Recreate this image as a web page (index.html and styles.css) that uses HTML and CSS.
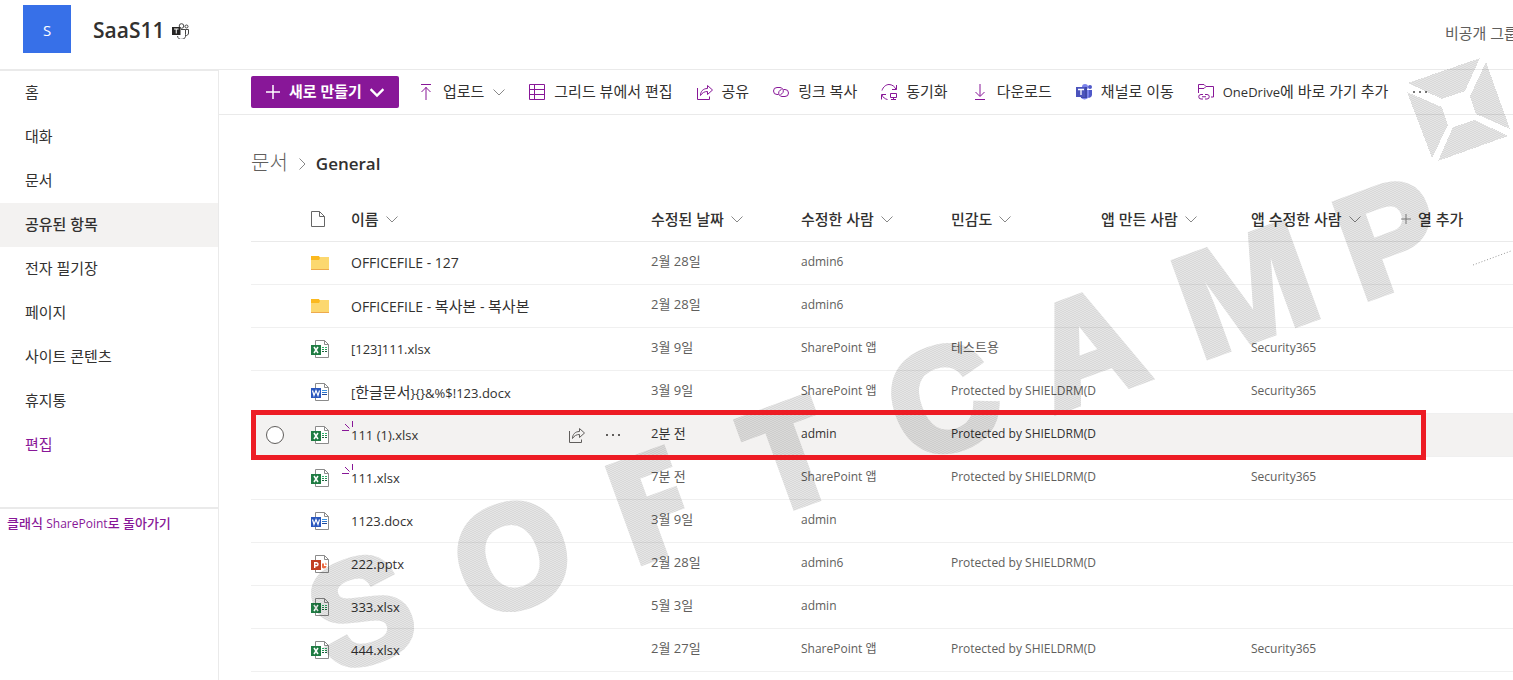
FILE: index.html
```html
<!DOCTYPE html>
<html lang="ko">
<head>
<meta charset="utf-8">
<title>SaaS11 - General</title>
<link rel="stylesheet" href="styles.css">
</head>
<body>
<svg class="defs" aria-hidden="true">
  <symbol id="chev" viewBox="0 0 12 12"><path d="M.5 3.5 6 9l5.500-5.500" fill="none" stroke="currentColor"/></symbol>
  <symbol id="share" viewBox="0 0 16 16"><path d="M.5 4v11.500h12v-3M3.500 11.500c0-4 2.500-7 7-7V1.500l5 4.500-5 4.500v-3c-3 0-5 1-7 4Z" fill="none" stroke="currentColor"/></symbol>
  <symbol id="dots" viewBox="0 0 16 16"><path d="M1 7h2v2H1zM7 7h2v2H7zM13 7h2v2h-2z" fill="currentColor"/></symbol>
  <symbol id="folder" viewBox="0 0 18 18"><path d="M0 3h18v13H0z" fill="#fcd86f"/><path d="M0 2h8l1 2-1 2H0z" fill="#fbb91f"/><path d="M0 15h18v1H0z" fill="#eeaa4c"/></symbol>
  <symbol id="page" viewBox="0 0 18 18"><path d="M4.500.5h9l4 4v13h-13z" fill="#fff" stroke="#8b8b8b"/><path d="M13.500.5v4h4" fill="none" stroke="#8b8b8b"/></symbol>
  <symbol id="xlsx" viewBox="0 0 18 18"><use href="#page"/><path d="M11 7.500h2M14 7.500h2" stroke="#31b06c"/><path d="M11 9.500h2M14 9.500h2" stroke="#219150"/><path d="M11 11.500h2M14 11.500h2" stroke="#17623a"/><path d="M0 5h10v10H0z" fill="#1f7c43"/><path d="m3 7 4 6M7 7l-4 6" stroke="#fff" stroke-width="1.500"/></symbol>
  <symbol id="docx" viewBox="0 0 18 18"><use href="#page"/><path d="M11 7.500h5" stroke="#3a93e0"/><path d="M11 9.500h5" stroke="#2b73ca"/><path d="M11 11.500h5" stroke="#20499c"/><path d="M0 5h10v10H0z" fill="#2a57bd"/><path d="m1.500 7.500 1.500 5 2-5 2 5 1.500-5" fill="none" stroke="#fff" stroke-width="1.200"/></symbol>
  <symbol id="pptx" viewBox="0 0 18 18"><use href="#page"/><path d="M11 8.500h2V11h2.500a2.500 2.500 0 0 1-4.500 1.500z" fill="#ec6a42"/><path d="M14 7.500v2.500h2a2.500 2.500 0 0 0-2-2.500" fill="#f7a78d"/><path d="M0 5h10v10H0z" fill="#c13f21"/><path d="M3.700 13V7.700h1.800a1.500 1.500 0 0 1 0 3H4" fill="none" stroke="#fff" stroke-width="1.400"/></symbol>
  <symbol id="new" viewBox="0 0 12 12"><path d="M0 9.500h7M3 3l4.500 4.500M10.500 0v6" fill="none" stroke="#881798"/></symbol>
</svg>

<header class="site">
  <div class="logo">S</div>
  <h1>SaaS11</h1>
  <svg class="teams-mark" viewBox="0 0 17 16" role="img" aria-label="Teams"><g fill="none" stroke="#444"><circle cx="9.500" cy="3" r="2.300"/><circle cx="14.500" cy="3.500" r="1.500"/><path d="M9 6.500h4.500v5a4 4 0 0 1-8 1.500M13.500 6.500h3V10a2.500 2.500 0 0 1-3 2.500"/></g><path d="M0 4h8.500v8H0z" fill="#252423"/><path d="M2 6h4.500M4.250 6v4.500" stroke="#fff"/></svg>
  <span class="privacy">비공개 그룹</span>
</header>

<div class="frame">
  <nav class="side">
    <ul>
      <li><a href="#">홈</a></li>
      <li><a href="#">대화</a></li>
      <li><a href="#">문서</a></li>
      <li><a href="#" class="current">공유된 항목</a></li>
      <li><a href="#">전자 필기장</a></li>
      <li><a href="#">페이지</a></li>
      <li><a href="#">사이트 콘텐츠</a></li>
      <li><a href="#">휴지통</a></li>
      <li><a href="#" class="edit">편집</a></li>
    </ul>
    <a class="classic" href="#">클래식 <span class="small">SharePoint</span>로 돌아가기</a>
  </nav>

  <main>
    <div class="commands">
      <button class="primary"><svg class="i16" viewBox="0 0 16 16"><path d="M8 1v14M1 8h14" stroke="currentColor" stroke-width="1.500"/></svg><span>새로 만들기</span><svg class="i14 bold" viewBox="0 0 12 12"><use href="#chev"/></svg></button>
      <button class="cmd"><svg class="i16" viewBox="0 0 16 16"><path d="M3 .5h10M8 3v13M3.500 8 8 3.500 12.500 8" fill="none" stroke="currentColor"/></svg><span>업로드</span><svg class="i12 muted"><use href="#chev"/></svg></button>
      <button class="cmd"><svg class="i16" viewBox="0 0 16 16"><path d="M.5.5h15v15H.5zM5.500.5v15M.5 5.500h15M.5 10.500h15" fill="none" stroke="currentColor"/></svg><span>그리드 뷰에서 편집</span></button>
      <button class="cmd"><svg class="i16"><use href="#share"/></svg><span>공유</span></button>
      <button class="cmd"><svg class="i16" viewBox="0 0 16 16"><path d="M5.500 10.500H4a3.500 3.500 0 0 1 0-7h3a3.500 3.500 0 0 1 3 5c-.5 1-1.500 1.700-2.500 2M10.500 5.500H12a3.500 3.500 0 0 1 0 7H9a3.500 3.500 0 0 1-3-5c.5-1 1.500-1.700 2.500-2" fill="none" stroke="currentColor"/></svg><span>링크 복사</span></button>
      <button class="cmd"><svg class="i16" viewBox="0 0 16 16"><path d="M1 6.500C2 3 5 .5 8 .5c3 0 6 2 7 5M15.500 1v4.500H11M6.500 15.500C4 15 2 13.500 1 11M.5 15.500V10.500H5M9.500 9.500h6v4h-6zM12.500 13.500v2M10 15.500h5" fill="none" stroke="currentColor"/></svg><span>동기화</span></button>
      <button class="cmd"><svg class="i16" viewBox="0 0 16 16"><path d="M3 15.500h10M8 0v12M3.500 8 8 12.500 12.500 8" fill="none" stroke="currentColor"/></svg><span>다운로드</span></button>
      <button class="cmd"><svg class="i16" viewBox="0 0 16 16"><circle cx="9" cy="3" r="3" fill="#7b83eb"/><circle cx="14" cy="3" r="2" fill="#5059c9"/><path d="M11 6h5v5a3 3 0 0 1-5 2z" fill="#5059c9"/><path d="M5 6h8v5a4.500 4.500 0 0 1-8.500 2z" fill="#7b83eb"/><path d="M5 3h6v11H5z" fill="#4048a8"/><path d="M0 3h9v10H0z" fill="#4b53bc"/><path d="M2 5.500h6M5 5.500V11" stroke="#fff" stroke-width="1.300"/></svg><span>채널로 이동</span></button>
      <button class="cmd"><svg class="i16" viewBox="0 0 16 16"><path d="M.5 9V.5H6l2 2h7.500v10.500H13M.5 4.500H6l2-2M7 10.500h2a2.200 2.200 0 0 1 0 4.500H7M5 15H3a2.200 2.200 0 0 1 0-4.500h2M4 12.750h4" fill="none" stroke="currentColor"/></svg><span><span class="latin">OneDrive</span>에 바로 가기 추가</span></button>
      <button class="cmd more" aria-label="더 보기"><svg class="i16"><use href="#dots"/></svg></button>
    </div>

    <div class="crumbs"><a href="#">문서</a><svg class="i12 turned"><use href="#chev"/></svg><h2>General</h2></div>

    <table>
      <colgroup><col class="c-pick"><col class="c-type"><col class="c-name"><col class="c-std"><col class="c-std"><col class="c-std"><col class="c-std"><col class="c-std"><col></colgroup>
      <thead>
        <tr>
          <th></th>
          <th class="kind"><svg class="i16" viewBox="0 0 16 16"><path d="M1.500.5h8l5 5v10h-13zM9.500.5v5h5" fill="none" stroke="#666"/></svg></th>
          <th><button>이름<svg class="i12"><use href="#chev"/></svg></button></th>
          <th><button>수정된 날짜<svg class="i12"><use href="#chev"/></svg></button></th>
          <th><button>수정한 사람<svg class="i12"><use href="#chev"/></svg></button></th>
          <th><button>민감도<svg class="i12"><use href="#chev"/></svg></button></th>
          <th><button>앱 만든 사람<svg class="i12"><use href="#chev"/></svg></button></th>
          <th><button>앱 수정한 사람<svg class="i12"><use href="#chev"/></svg></button></th>
          <th><button><svg class="i10" viewBox="0 0 10 10"><path d="M5 0v10M0 5h10" stroke="currentColor"/></svg>열 추가</button></th>
        </tr>
      </thead>
      <tbody>
        <tr><td></td><td class="type"><svg class="i18"><use href="#folder"/></svg></td><td class="name"><a class="dir" href="#">OFFICEFILE - 127</a></td><td>2월 28일</td><td><span class="small">admin6</span></td><td></td><td></td><td></td><td></td></tr>
        <tr><td></td><td class="type"><svg class="i18"><use href="#folder"/></svg></td><td class="name"><a class="dir" href="#">OFFICEFILE - <span class="ko">복사본</span> - <span class="ko">복사본</span></a></td><td>2월 28일</td><td><span class="small">admin6</span></td><td></td><td></td><td></td><td></td></tr>
        <tr><td></td><td class="type"><svg class="i18"><use href="#xlsx"/></svg></td><td class="name"><a href="#">[123]111.xlsx</a></td><td>3월 9일</td><td><span class="small">SharePoint 앱</span></td><td>테스트용</td><td></td><td><span class="small">Security365</span></td><td></td></tr>
        <tr><td></td><td class="type"><svg class="i18"><use href="#docx"/></svg></td><td class="name"><a href="#">[<span class="ko">한글문서</span>}{}&amp;%$!123.docx</a></td><td>3월 9일</td><td><span class="small">SharePoint 앱</span></td><td><span class="small">Protected by SHIELDRM(D</span></td><td></td><td><span class="small">Security365</span></td><td></td></tr>
        <tr class="active"><td class="pick"><input type="radio" name="row" aria-label="111 (1).xlsx 선택"></td><td class="type"><svg class="i18"><use href="#xlsx"/></svg></td><td class="name"><div class="line"><svg class="new"><use href="#new"/></svg><a href="#">111 (1).xlsx</a><button class="act share" aria-label="공유"><svg class="i16"><use href="#share"/></svg></button><button class="act" aria-label="작업 표시"><svg class="i16"><use href="#dots"/></svg></button></div></td><td>2분 전</td><td><span class="small">admin</span></td><td><span class="small">Protected by SHIELDRM(D</span></td><td></td><td></td><td></td></tr>
        <tr><td></td><td class="type"><svg class="i18"><use href="#xlsx"/></svg></td><td class="name"><div class="line"><svg class="new"><use href="#new"/></svg><a href="#">111.xlsx</a></div></td><td>7분 전</td><td><span class="small">SharePoint 앱</span></td><td><span class="small">Protected by SHIELDRM(D</span></td><td></td><td><span class="small">Security365</span></td><td></td></tr>
        <tr><td></td><td class="type"><svg class="i18"><use href="#docx"/></svg></td><td class="name"><a href="#">1123.docx</a></td><td>3월 9일</td><td><span class="small">admin</span></td><td></td><td></td><td></td><td></td></tr>
        <tr><td></td><td class="type"><svg class="i18"><use href="#pptx"/></svg></td><td class="name"><a href="#">222.pptx</a></td><td>2월 28일</td><td><span class="small">admin6</span></td><td><span class="small">Protected by SHIELDRM(D</span></td><td></td><td></td><td></td></tr>
        <tr><td></td><td class="type"><svg class="i18"><use href="#xlsx"/></svg></td><td class="name"><a href="#">333.xlsx</a></td><td>5월 3일</td><td><span class="small">admin</span></td><td></td><td></td><td></td><td></td></tr>
        <tr><td></td><td class="type"><svg class="i18"><use href="#xlsx"/></svg></td><td class="name"><a href="#">444.xlsx</a></td><td>2월 27일</td><td><span class="small">SharePoint 앱</span></td><td><span class="small">Protected by SHIELDRM(D</span></td><td></td><td><span class="small">Security365</span></td><td></td></tr>
      </tbody>
    </table>
  </main>
</div>

<svg class="watermark" width="1513" height="680" viewBox="0 0 1513 680">
  <defs>
    <pattern id="grain" width="4" height="4" patternUnits="userSpaceOnUse">
      <path d="M0 0h4v4H0z" fill="#000" fill-opacity=".1"/>
      <path d="M0 0h2v1H0zM2 1h2v1H2zM0 2h2v1H0zM2 3h2v1H2z" fill="#000" fill-opacity=".05"/>
    </pattern>
  </defs>
  <g fill="url(#grain)" shape-rendering="crispEdges">
    <path d="M1408 83 1480 58 1465 91 1442 99ZM1486 62 1510 129 1476 114 1470 96ZM1407 92 1442 107 1448 125 1432 158ZM1438 161 1453 127 1475 120 1508 136Z"/>
  </g>
  <path d="m1473 265 38-14" stroke="#999" stroke-dasharray="1 2" fill="none"/>
  <mask id="letters"><text class="mark" transform="rotate(-20)" x="82 235 398 542 697 850 1000 1176" y="748">SO<tspan class="wide" y="751">FT</tspan><tspan y="748">CA</tspan><tspan class="wide" y="751">M</tspan><tspan y="748">P</tspan></text></mask>
  <rect width="1513" height="680" fill="url(#grain)" mask="url(#letters)"/>
</svg>
<div class="callout"></div>
</body>
</html>
```
FILE: styles.css
```css
* { box-sizing: border-box; }
html, body { height: 100%; }
body {
  margin: 0;
  display: flex;
  flex-direction: column;
  position: relative;
  overflow: hidden;
  background: #fff;
  color: #323130;
  font: 15px/20px "Open Sans", "Noto Sans CJK KR", sans-serif;
}
a { color: inherit; text-decoration: none; }
button { font: inherit; color: inherit; background: none; border: 0; padding: 0; margin: 0; white-space: nowrap; }
svg { flex: none; display: block; }
.defs { position: absolute; width: 0; height: 0; }
.i10 { width: 10px; height: 10px; }
.i12 { width: 12px; height: 12px; }
.i14 { width: 14px; height: 14px; }
.i16 { width: 16px; height: 16px; }
.i18 { width: 18px; height: 18px; }
.bold { stroke-width: 2; }
.latin { font-size: 13px; }

.site {
  flex: none;
  height: 70px;
  display: flex;
  align-items: flex-start;
  padding: 5px 0 0 23px;
  border-bottom: 1px solid #eaeaea;
}
.logo { width: 48px; height: 48px; background: #3770e8; color: #fff; font-size: 15px; line-height: 50px; text-align: center; }
.site h1 { margin: 0 8px 0 22px; font-size: 21px; line-height: 51px; font-weight: 600; }
.teams-mark { width: 17px; height: 16px; margin-top: 18px; }
.privacy { width: 68px; margin: 18px 0 0 auto; color: #605e5c; white-space: nowrap; }

.frame { flex: 1; min-height: 0; display: flex; }
.side { flex: none; width: 219px; border-right: 1px solid #eaeaea; border-top: 1px solid #eaeaea; }
.side ul { list-style: none; margin: 0; padding: 0 0 40px; border-bottom: 2px solid #eaeaea; }
.side li a { display: block; padding: 10px 25px 12px; line-height: 22px; }
.side .current { background: #f3f2f1; font-weight: 500; }
.side .edit, .classic { color: #881798; }
.classic { display: block; padding: 4px 7px; font-size: 13px; font-weight: 500; white-space: nowrap; }

main { flex: 1; min-width: 0; }
.commands { display: flex; align-items: center; height: 45px; padding-left: 32px; border-bottom: 1px solid #eaeaea; gap: 24px; }
.commands span { padding-bottom: 2px; }
.cmd { display: flex; align-items: center; gap: 9px; color: #323130; }
.cmd svg { color: #881798; }
.cmd .muted { color: #888; }
.cmd.more svg { color: #777; }
.primary { display: flex; align-items: center; gap: 8px; height: 32px; padding: 0 15px 0 14px; margin-right: -5px; border-radius: 2px; background: #881798; color: #fff; font-weight: 700; }

.crumbs { display: flex; align-items: flex-start; gap: 8px; height: 83px; padding: 32px 32px 0; }
.crumbs a { font-size: 20px; line-height: 32px; color: #605e5c; font-weight: 300; }
.crumbs svg { margin-top: 11px; color: #888; }
.crumbs h2 { margin: 0; font-size: 17px; line-height: 34px; font-weight: 600; }
.turned { transform: rotate(-90deg); }

table { width: calc(100% - 32px); margin-left: 32px; table-layout: fixed; border-collapse: separate; border-spacing: 0; }
.c-pick { width: 48px; }
.c-type { width: 44px; }
.c-name { width: 300px; }
.c-std { width: 150px; }
th, td { height: 43px; padding: 0 8px; text-align: left; vertical-align: middle; border-bottom: 1px solid #f0f0f0; white-space: nowrap; }
th { height: 44px; padding-bottom: 2px; border-bottom-color: #eaeaea; }
th button { display: flex; align-items: center; gap: 7px; font-weight: 500; }
th svg { color: #888; }
td { font-size: 13px; line-height: 18px; color: #605e5c; padding-bottom: 4px; }
td.name { color: #323130; padding-bottom: 0; }
td.type, td.pick { padding-bottom: 0; }
.type svg { margin-left: 4px; }
.kind svg { margin-left: 3px; }
.dir { font-size: 14px; }
.ko { font-size: 15px; }
.small { font-size: 12px; }
.active td { background: #f3f2f1; color: #323130; }
.pick { text-align: center; }
.pick input { appearance: none; display: block; width: 18px; height: 18px; margin: 0 auto; border: 1px solid #605e5c; border-radius: 50%; background: #fff; }
.line { position: relative; display: flex; align-items: center; }
.new { position: absolute; left: -9px; top: -5px; width: 12px; height: 12px; }
.act { color: #605e5c; }
.act.share { margin: 0 20px 0 auto; }
.act:last-child { margin-right: 14px; }

.watermark { position: absolute; left: 0; top: 0; pointer-events: none; }
.mark { font: bold 145px "Liberation Sans", Arial, sans-serif; fill: #fff; stroke: #fff; stroke-width: 7px; }
.wide { font: 800 148px "Open Sans", sans-serif; stroke-width: 1px; }
.callout { position: absolute; left: 251px; right: 87px; top: 410px; height: 50px; border: 5px solid #ed1c24; pointer-events: none; }
```
